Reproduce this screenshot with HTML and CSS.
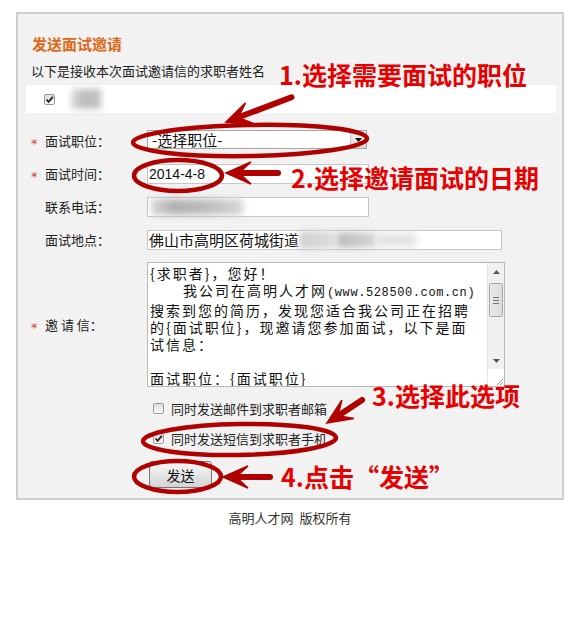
FILE: index.html
```html
<!DOCTYPE html>
<html lang="zh-CN">
<head>
<meta charset="utf-8">
<title>发送面试邀请</title>
<link rel="stylesheet" href="styles.css">
</head>
<body>
<div class="page">
  <div class="panel">
    <h2 class="title">发送面试邀请</h2>
    <p class="sub">以下是接收本次面试邀请信的求职者姓名</p>
    <div class="namerow">
      <span class="cb"><svg width="9" height="9" viewBox="0 0 9 9"><path d="M1.5 4.5 L3.6 6.8 L7.8 1.8" fill="none" stroke="#222" stroke-width="1.8"/></svg></span>
      <span class="blur blur-name"></span>
    </div>

    <div class="frow first">
      <span class="star">*</span><span class="lbl">面试职位：</span>
      <div class="select"><span class="seltext">-选择职位-</span><span class="selbtn"><svg width="7" height="4" viewBox="0 0 7 4"><path d="M0 0 H7 L3.5 4Z" fill="#111"/></svg></span></div>
    </div>
    <div class="frow">
      <span class="star">*</span><span class="lbl">面试时间：</span>
      <div class="field w222 date">2014-4-8</div>
    </div>
    <div class="frow">
      <span class="star"></span><span class="lbl">联系电话：</span>
      <div class="field w222"><span class="blur blur-phone"></span></div>
    </div>
    <div class="frow">
      <span class="star"></span><span class="lbl">面试地点：</span>
      <div class="field w355 addr">佛山市高明区荷城街道<span class="blur blur-addr1"></span><span class="blur blur-addr2"></span><span class="blur blur-addr3"></span></div>
    </div>
    <div class="frow tarow">
      <span class="star">*</span><span class="lbl">邀 请 信：</span>
      <div class="ta">
        <div class="ta-text">
          <div>{求职者}，您好！</div>
          <div class="ind">我公司在高明人才网<span class="mono">(www.528500.com.cn)</span></div>
          <div>搜索到您的简历，发现您适合我公司正在招聘</div>
          <div>的{面试职位}，现邀请您参加面试，以下是面</div>
          <div>试信息：</div>
          <div class="blank"></div>
          <div>面试职位：{面试职位}</div>
          <div>面试时间：{面试时间}</div>
        </div>
        <div class="sb">
          <div class="sb-btn"><svg width="7" height="4" viewBox="0 0 7 4"><path d="M0 4 H7 L3.5 0Z" fill="#555"/></svg></div>
          <div class="sb-thumb"><i></i><i></i><i></i></div>
          <div class="sb-track"></div>
          <div class="sb-btn"><svg width="7" height="4" viewBox="0 0 7 4"><path d="M0 0 H7 L3.5 4Z" fill="#555"/></svg></div>
          <div class="sb-corner"><svg width="10" height="10" viewBox="0 0 10 10"><path d="M9 3 L3 9 M9 6 L6 9" stroke="#999" stroke-width="1"/></svg></div>
        </div>
      </div>
    </div>

    <div class="opts">
      <label class="opt"><span class="cb"></span><span>同时发送邮件到求职者邮箱</span></label>
      <label class="opt"><span class="cb"><svg width="9" height="9" viewBox="0 0 9 9"><path d="M1.5 4.5 L3.6 6.8 L7.8 1.8" fill="none" stroke="#222" stroke-width="1.8"/></svg></span><span>同时发送短信到求职者手机</span></label>
      <button class="btn" type="button">发送</button>
    </div>
  </div>
  <div class="footer">高明人才网&nbsp;&nbsp;版权所有</div>

  <div class="notes">
    <svg class="marks" width="580" height="620" viewBox="0 0 580 620">
      <g fill="none" stroke="#b00000" stroke-width="4.5">
        <ellipse cx="250" cy="140.5" rx="117" ry="15.5" transform="rotate(-1 250 140.5)"/>
        <ellipse cx="178" cy="175.5" rx="44" ry="15.5"/>
        <ellipse cx="239.5" cy="439.5" rx="96.5" ry="15.5" transform="rotate(-1 239.5 439.5)"/>
        <ellipse cx="177.5" cy="476.5" rx="43.5" ry="15.5"/>
      </g>
      <g fill="#b00000" stroke="#b00000" stroke-linecap="round">
        <g transform="translate(226 122) rotate(-20.7)">
          <line x1="12" y1="0" x2="70" y2="0" stroke-width="6"/>
          <polygon points="0,0 25,-11 13,0 25,11" stroke-width="1.5"/>
        </g>
        <g transform="translate(226 173)">
          <line x1="12" y1="0" x2="52" y2="0" stroke-width="6"/>
          <polygon points="0,0 25,-11 13,0 25,11" stroke-width="1.5"/>
        </g>
        <g transform="translate(327 423) rotate(-33.3)">
          <line x1="12" y1="0" x2="42" y2="0" stroke-width="6"/>
          <polygon points="0,0 25,-11 13,0 25,11" stroke-width="1.5"/>
        </g>
        <g transform="translate(223 477)">
          <line x1="12" y1="0" x2="47" y2="0" stroke-width="6"/>
          <polygon points="0,0 25,-11 13,0 25,11" stroke-width="1.5"/>
        </g>
      </g>
    </svg>
    <span class="note n1">1.选择需要面试的职位</span>
    <span class="note n2">2.选择邀请面试的日期</span>
    <span class="note n3">3.选择此选项</span>
    <span class="note n4">4.点击“发送”</span>
  </div>
</div>
</body>
</html>
```
FILE: styles.css
```css
body {
  margin: 0;
  background: #fff;
  font-family: "Noto Sans CJK SC", "Noto Sans", sans-serif;
  color: #333;
}
.page {
  position: relative;
  width: 580px;
  height: 620px;
  overflow: hidden;
}
.panel {
  margin: 12px 0 0 16px;
  width: 548px;
  height: 488px;
  box-sizing: border-box;
  border: 2px solid #cdcdcd;
  background: #f2f2f2;
  padding: 20px 6px 0 8px;
}
.title {
  margin: 0 0 0 6px;
  font-size: 15px;
  line-height: 20px;
  font-weight: bold;
  color: #e06818;
}
.sub {
  margin: 8px 0 0 5px;
  font-size: 13px;
  line-height: 18px;
  color: #222;
}
.namerow {
  margin-top: 5px;
  height: 28px;
  background: #fff;
  display: flex;
  align-items: center;
  padding-left: 18px;
}
.cb {
  width: 11px;
  height: 11px;
  box-sizing: border-box;
  border: 1px solid #9a9a9a;
  border-radius: 2px;
  background: linear-gradient(#dedede, #fafafa);
  display: inline-flex;
  align-items: center;
  justify-content: center;
  flex: none;
}
.blur {
  display: inline-block;
  filter: blur(3px);
}
.blur-name {
  width: 30px;
  height: 20px;
  margin-left: 16px;
  background: linear-gradient(90deg, #dedede, #bdbdbd 40%, #c2c2c2);
}
.frow {
  display: grid;
  grid-template-columns: 19px 102px auto;
  align-items: center;
  height: 33px;
}
.frow.first {
  margin-top: 11px;
}
.star {
  color: #d2451b;
  font-size: 13px;
  line-height: 13px;
  padding: 6px 0 0 5px;
  font-family: "DejaVu Sans", sans-serif;
}
.lbl {
  font-size: 13px;
  line-height: 18px;
  color: #222;
}
.select {
  width: 220px;
  height: 19px;
  box-sizing: border-box;
  border: 1px solid #a5a5a5;
  background: #fff;
  display: flex;
  margin-top: -2px;
}
.seltext {
  flex: 1;
  font-size: 15px;
  line-height: 17px;
  padding-left: 4px;
  color: #111;
}
.selbtn {
  width: 15px;
  background: linear-gradient(#f6f6f6, #d8d8d8);
  border-left: 1px solid #c2c2c2;
  display: flex;
  align-items: center;
  justify-content: center;
}
.field {
  height: 20px;
  box-sizing: border-box;
  border: 1px solid #c6c6c6;
  background: #fff;
  display: flex;
  align-items: center;
  padding-left: 1px;
  color: #111;
}
.w222 { width: 222px; }
.w355 { width: 355px; }
.date {
  font-family: "Liberation Sans", Arial, sans-serif;
  font-size: 14px;
}
.addr {
  font-size: 15px;
  line-height: 18px;
}
.blur-phone {
  width: 92px;
  height: 16px;
  margin-left: 2px;
  background: linear-gradient(90deg, #d8d8d8, #b0b0b0 25%, #bdbdbd 60%, #d8d8d8);
}
.blur-addr1 {
  width: 38px;
  height: 18px;
  background: linear-gradient(90deg, #cfcfcf, #e0e0e0);
}
.blur-addr2 {
  width: 40px;
  height: 16px;
  background: linear-gradient(90deg, #bdbdbd, #d6d6d6);
}
.blur-addr3 {
  width: 40px;
  height: 14px;
  background: #e4e4e4;
}
.tarow {
  height: auto;
  margin-top: 6px;
}
.ta {
  width: 358px;
  height: 125px;
  box-sizing: border-box;
  border: 1px solid #b8b8b8;
  background: #fff;
  display: flex;
}
.ta-text {
  flex: 1;
  overflow: hidden;
  padding: 2px 0 0 2px;
  font-size: 14px;
  line-height: 17px;
  letter-spacing: 2px;
  white-space: nowrap;
  color: #111;
}
.ta-text .ind {
  padding-left: 33px;
}
.ta-text .blank {
  height: 17px;
}
.mono {
  font-family: "Liberation Mono", monospace;
  font-size: 12px;
  letter-spacing: 0.6px;
}
.sb {
  width: 16px;
  flex: none;
  background: #f0f0f0;
  border-left: 1px solid #e6e6e6;
  display: flex;
  flex-direction: column;
}
.sb-btn {
  height: 17px;
  display: flex;
  align-items: center;
  justify-content: center;
}
.sb-thumb {
  margin: 3px 1px 0;
  height: 34px;
  box-sizing: border-box;
  border: 1px solid #a8a8a8;
  border-radius: 2px;
  background: linear-gradient(90deg, #e9e9e9, #dcdcdc);
  display: flex;
  flex-direction: column;
  align-items: center;
  justify-content: center;
  gap: 2px;
}
.sb-thumb i {
  display: block;
  width: 6px;
  height: 1px;
  background: #777;
}
.sb-track {
  flex: 1;
}
.sb-corner {
  height: 17px;
  background: #fff;
  display: flex;
  align-items: flex-end;
  justify-content: flex-end;
}
.opts {
  padding-left: 127px;
  margin-top: 6px;
}
.opt {
  display: flex;
  align-items: center;
  gap: 7px;
  height: 30px;
  font-size: 13px;
  color: #222;
}
.btn {
  display: block;
  margin: 8px 0 0 -4px;
  width: 63px;
  height: 27px;
  border: 1px solid #767676;
  border-radius: 3px;
  background: linear-gradient(#f8f8f8, #e2e2e2 60%, #d4d4d4);
  font-family: "Noto Sans CJK SC", sans-serif;
  font-size: 14px;
  color: #111;
  padding: 0;
}
.footer {
  margin-top: 10px;
  text-align: center;
  font-size: 13px;
  line-height: 16px;
  color: #333;
}
.notes {
  position: absolute;
  left: 0;
  top: 0;
  width: 580px;
  height: 620px;
  pointer-events: none;
}
.marks {
  position: absolute;
  left: 0;
  top: 0;
}
.note {
  position: absolute;
  font-family: "Noto Sans CJK SC", sans-serif;
  font-weight: bold;
  font-size: 25px;
  line-height: 27px;
  color: #e60000;
  white-space: nowrap;
}
.n1 { left: 279px; top: 61px; }
.n2 { left: 291px; top: 164px; }
.n3 { left: 372px; top: 382px; }
.n4 { left: 281px; top: 463px; }
```
